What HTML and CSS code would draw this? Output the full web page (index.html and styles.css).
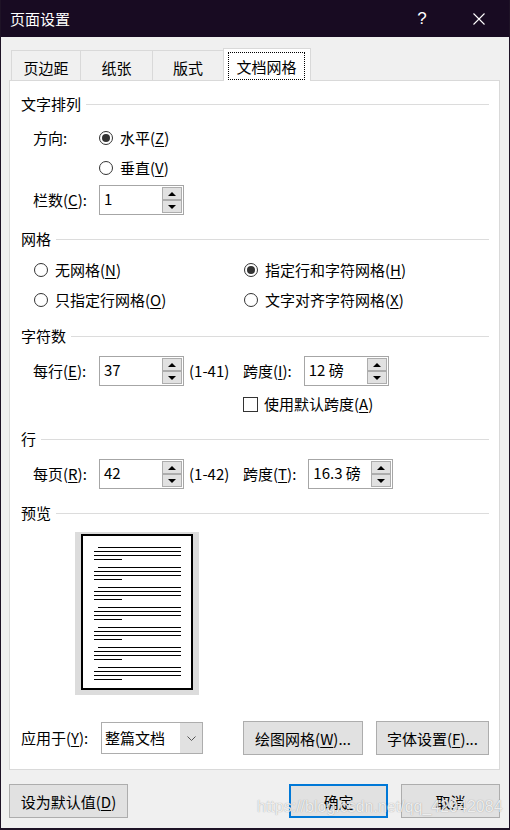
FILE: index.html
```html
<!DOCTYPE html>
<html lang="zh-CN">
<head>
<meta charset="utf-8">
<title>页面设置</title>
<link rel="stylesheet" href="styles.css">
</head>
<body>
<div class="window">
  <div class="titlebar">
    <span class="title">页面设置</span>
    <span class="cap-btn help">?</span>
    <span class="cap-btn close">
      <svg width="12" height="12" viewBox="0 0 12 12"><path d="M0.5 0.5 L11.5 11.5 M11.5 0.5 L0.5 11.5" stroke="#fff" stroke-width="1.1" fill="none"/></svg>
    </span>
  </div>

  <div class="tabs">
    <div class="tab tab-margins">页边距</div>
    <div class="tab tab-paper">纸张</div>
    <div class="tab tab-layout">版式</div>
    <div class="tab tab-grid active"><span class="focus">文档网格</span></div>
  </div>

  <div class="panel">
    <div class="heading">文字排列</div>
    <div class="row mt9">
      <span class="label">方向:</span>
      <span class="radio on"></span><span>水平(<u>Z</u>)</span>
    </div>
    <div class="row">
      <span class="label"></span>
      <span class="radio"></span><span>垂直(<u>V</u>)</span>
    </div>
    <div class="row mt2">
      <span class="label">栏数(<u>C</u>):</span>
      <div class="spin"><span class="val">1</span><span class="arrows"><span class="up"></span><span class="dn"></span></span></div>
    </div>

    <div class="heading mt14">网格</div>
    <div class="opts mt6">
      <div class="opt"><span class="radio"></span><span>无网格(<u>N</u>)</span></div>
      <div class="opt"><span class="radio on"></span><span>指定行和字符网格(<u>H</u>)</span></div>
      <div class="opt"><span class="radio"></span><span>只指定行网格(<u>O</u>)</span></div>
      <div class="opt"><span class="radio"></span><span>文字对齐字符网格(<u>X</u>)</span></div>
    </div>

    <div class="heading mt11">字符数</div>
    <div class="row mt10">
      <span class="label">每行(<u>E</u>):</span>
      <div class="spin"><span class="val">37</span><span class="arrows"><span class="up"></span><span class="dn"></span></span></div>
      <span class="range">(1-41)</span>
      <span class="pitch-label">跨度(<u>I</u>):</span>
      <div class="spin"><span class="val">12 磅</span><span class="arrows"><span class="up"></span><span class="dn"></span></span></div>
    </div>
    <div class="row check-row mt3">
      <span class="checkbox"></span><span>使用默认跨度(<u>A</u>)</span>
    </div>

    <div class="heading mt10">行</div>
    <div class="row mt10">
      <span class="label">每页(<u>R</u>):</span>
      <div class="spin"><span class="val">42</span><span class="arrows"><span class="up"></span><span class="dn"></span></span></div>
      <span class="range">(1-42)</span>
      <span class="pitch-label">跨度(<u>T</u>):</span>
      <div class="spin"><span class="val">16.3 磅</span><span class="arrows"><span class="up"></span><span class="dn"></span></span></div>
    </div>

    <div class="heading mt14">预览</div>
    <div class="preview mt9">
      <div class="page">
        <div class="para"><i class="ln first"></i><i class="ln"></i><i class="ln"></i><i class="ln last"></i></div>
        <div class="para"><i class="ln first"></i><i class="ln"></i><i class="ln"></i><i class="ln last"></i></div>
        <div class="para"><i class="ln first"></i><i class="ln"></i><i class="ln"></i><i class="ln last"></i></div>
        <div class="para"><i class="ln first"></i><i class="ln"></i><i class="ln"></i><i class="ln last"></i></div>
        <div class="para"><i class="ln first"></i><i class="ln"></i><i class="ln"></i><i class="ln last"></i></div>
        <div class="para"><i class="ln first"></i><i class="ln"></i><i class="ln"></i><i class="ln last"></i></div>
        <div class="para"><i class="ln first"></i><i class="ln"></i><i class="ln"></i><i class="ln last"></i></div>
      </div>
    </div>

    <div class="apply-row mt26">
      <span class="apply-label">应用于(<u>Y</u>):</span>
      <div class="combo">
        <span class="field">整篇文档</span>
        <span class="drop"><svg width="9" height="5" viewBox="0 0 9 5"><path d="M0.5 0.5 L4.5 4.5 L8.5 0.5" stroke="#555" stroke-width="1" fill="none"/></svg></span>
      </div>
      <span class="spacer"></span>
      <button class="btn btn-draw">绘图网格(<u>W</u>)...</button>
      <button class="btn btn-font">字体设置(<u>F</u>)...</button>
    </div>
  </div>

  <div class="footer">
    <button class="btn btn-default">设为默认值(<u>D</u>)</button>
    <span class="spacer"></span>
    <button class="btn btn-ok">确定</button>
    <button class="btn btn-cancel">取消</button>
  </div>

  <span class="watermark">https://blog.csdn.net/qq_42942084</span>
</div>
</body>
</html>
```

FILE: styles.css
```css
* { box-sizing: border-box; }

html, body {
  margin: 0;
  padding: 0;
}

body {
  width: 510px;
  height: 830px;
  background: #f0f0f0;
  font-family: "Noto Sans CJK SC", "Microsoft YaHei", sans-serif;
  font-size: 15px;
  line-height: 20px;
  color: #000;
}

u { text-decoration: underline; text-underline-offset: 2px; text-decoration-thickness: 1px; }

.window {
  position: relative;
  width: 510px;
  height: 830px;
  background: #f0f0f0;
  border-left: 1px solid #1e1326;
  border-right: 1px solid #1e1326;
  border-bottom: 2px solid #1e1326;
  display: flex;
  flex-direction: column;
  overflow: hidden;
}

/* title bar */
.titlebar {
  height: 37px;
  margin: 0 -1px;
  padding-left: 10px;
  background: #180b22;
  color: #fff;
  display: flex;
  align-items: center;
  flex: none;
}
.title { flex: 1; font-size: 15px; }
.cap-btn {
  width: 46px;
  height: 37px;
  display: flex;
  align-items: center;
  justify-content: center;
}
.help {
  font-family: "Liberation Sans", sans-serif;
  font-size: 17px;
  font-weight: 300;
}
.close { margin-left: 11px; margin-right: 8px; }

/* tabs */
.tabs {
  display: flex;
  align-items: flex-end;
  height: 32px;
  margin: 11px 0 0 10px;
  flex: none;
}
.tab {
  height: 30px;
  border-top: 1px solid #d9d9d9;
  border-left: 1px solid #d9d9d9;
  display: flex;
  align-items: center;
  justify-content: center;
  padding-top: 4px;
}
.tab-margins { width: 69px; }
.tab-paper { width: 72px; }
.tab-layout { width: 71px; }
.tab.active {
  position: relative;
  z-index: 1;
  width: 88px;
  height: 33px;
  margin-bottom: -1px;
  background: #fff;
  border-right: 1px solid #d9d9d9;
  align-items: flex-start;
  justify-content: flex-start;
  padding: 3px 0 0 4px;
}
.focus {
  width: 77px;
  height: 28px;
  border: 1px dotted #000;
  display: flex;
  align-items: center;
  justify-content: center;
  padding-top: 2px;
}

/* panel */
.panel {
  flex: none;
  height: 690px;
  margin: 0 9px 0 8px;
  background: #fff;
  border: 1px solid #d9d9d9;
  padding: 13px 10px 0 11px;
}

.heading {
  display: flex;
  align-items: center;
  height: 20px;
  gap: 5px;
  white-space: nowrap;
}
.heading::after {
  content: "";
  flex: 1;
  border-top: 1px solid #dcdcdc;
  margin-top: 1px;
}

.mt2 { margin-top: 2px; }
.mt3 { margin-top: 3px; }
.mt6 { margin-top: 6px; }
.mt9 { margin-top: 9px; }
.mt10 { margin-top: 10px; }
.mt11 { margin-top: 11px; }
.mt14 { margin-top: 14px; }
.mt26 { margin-top: 26px; }

.row {
  display: flex;
  align-items: center;
  height: 30px;
  padding-left: 12px;
  white-space: nowrap;
}
.label { width: 66px; flex: none; }

.radio {
  flex: none;
  width: 14px;
  height: 14px;
  border: 1px solid #333;
  border-radius: 50%;
  margin-right: 7px;
  display: flex;
  align-items: center;
  justify-content: center;
  background: #fff;
}
.radio.on::after {
  content: "";
  width: 8px;
  height: 8px;
  border-radius: 50%;
  background: #333;
}

.opts {
  display: grid;
  grid-template-columns: 210px 1fr;
  padding-left: 13px;
}
.opt {
  display: flex;
  align-items: center;
  height: 30px;
  white-space: nowrap;
}

/* spin box */
.spin {
  flex: none;
  width: 85px;
  height: 30px;
  border: 1px solid #a6a6a6;
  background: #fff;
  padding: 1px;
  display: flex;
}
.spin .val {
  flex: 1;
  padding-left: 3px;
  padding-bottom: 2px;
  display: flex;
  align-items: center;
}
.arrows {
  width: 20px;
  display: flex;
  flex-direction: column;
}
.arrows .up, .arrows .dn {
  flex: 1;
  background: #e1e1e1;
  border: 1px solid #adadad;
  display: flex;
  align-items: center;
  justify-content: center;
}
.arrows .up::after {
  content: "";
  border-left: 4px solid transparent;
  border-right: 4px solid transparent;
  border-bottom: 4px solid #000;
}
.arrows .dn::after {
  content: "";
  border-left: 4px solid transparent;
  border-right: 4px solid transparent;
  border-top: 4px solid #000;
}

.range { width: 59px; padding-left: 5px; flex: none; }
.pitch-label { margin-right: 12px; }

.check-row { padding-left: 222px; }
.checkbox {
  flex: none;
  width: 15px;
  height: 15px;
  border: 1px solid #333;
  background: #fff;
  margin-right: 6px;
}

/* preview */
.preview {
  width: 124px;
  height: 163px;
  margin-left: 54px;
  background: #dcdcdc;
  padding: 2px 6px 5px 6px;
}
.page {
  width: 112px;
  height: 156px;
  background: #fff;
  border: 2px solid #000;
  padding: 11px 0 0 11px;
  display: flex;
  flex-direction: column;
  gap: 7px;
}
.para {
  display: flex;
  flex-direction: column;
  gap: 3px;
}
.ln {
  display: block;
  height: 1px;
  width: 87px;
  background: #000;
}
.ln.first { width: 83px; margin-left: 4px; }
.ln.last { width: 28px; }

/* apply row */
.apply-row {
  display: flex;
  align-items: center;
  height: 34px;
  white-space: nowrap;
}
.apply-label { width: 80px; flex: none; }
.combo {
  width: 102px;
  height: 32px;
  border: 1px solid #adadad;
  background: #fff;
  display: flex;
}
.combo .field {
  flex: 1;
  padding-left: 3px;
  display: flex;
  align-items: center;
}
.combo .drop {
  width: 22px;
  background: #e1e1e1;
  display: flex;
  align-items: center;
  justify-content: center;
}
.spacer { flex: 1; }

.btn {
  font-family: inherit;
  font-size: 15px;
  color: #000;
  height: 34px;
  background: #e1e1e1;
  border: 1px solid #adadad;
  padding: 0;
  margin: 0;
  white-space: nowrap;
}
.btn-draw { width: 120px; }
.btn-font { width: 113px; margin-left: 13px; }

/* footer */
.footer {
  flex: none;
  display: flex;
  align-items: center;
  height: 34px;
  margin: 14px 9px 0 8px;
}
.btn-default { width: 119px; }
.btn-ok { width: 99px; border: 2px solid #0078d7; }
.btn-cancel { width: 99px; margin-left: 13px; }

.watermark {
  position: absolute;
  left: 256px;
  top: 797px;
  font-family: "Liberation Sans", sans-serif;
  font-size: 16px;
  line-height: 20px;
  color: rgba(252, 252, 252, 0.85);
  text-shadow: 0 0 1px rgba(90, 90, 90, 0.6);
  white-space: nowrap;
  pointer-events: none;
}
```
